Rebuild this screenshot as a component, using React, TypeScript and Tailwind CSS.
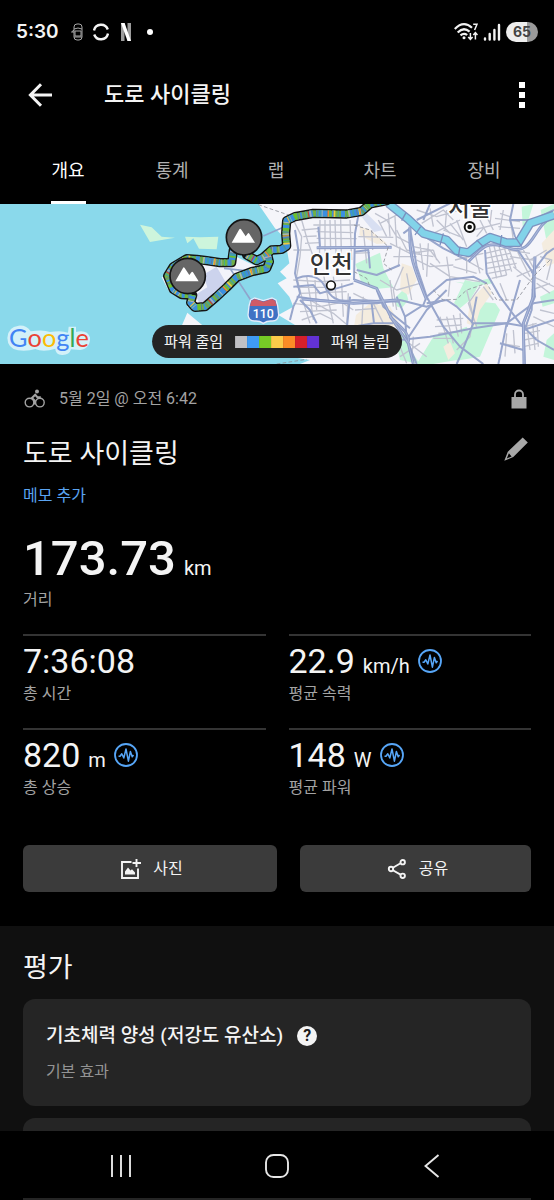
import type { ReactNode } from "react";

const WATER = "#8ad9eb";

const greenAreas = [
  "M1066 192 L1140 158 L1150 205 L1168 240 L1180 262 L1120 268 L1085 250Z",
  "M1188 290 L1215 265 L1225 300 L1205 325 L1188 318Z",
  "M1362 310 L1395 240 L1440 250 L1410 300 L1380 325Z",
  "M1425 350 L1440 305 L1486 310 L1500 330 L1470 400 L1440 470 L1370 482 L1350 450 L1400 420Z",
  "M1250 492 L1300 410 L1350 400 L1400 380 L1420 420 L1370 480 L1300 492Z",
  "M1565 20 L1600 12 L1585 60 L1568 80Z",
  "M1622 30 L1662 12 L1662 120 L1640 125Z",
  "M1630 470 L1640 420 L1662 400 L1662 480Z",
  "M1182 400 L1215 400 L1225 440 L1260 492 L1200 480Z",
  "M1620 290 L1662 270 L1662 310 L1628 320Z",
  "M1365 245 L1405 250 L1470 235 L1480 250 L1420 258Z",
];

const sandAreas = [
  "M1068 345 L1110 310 L1170 318 L1195 370 L1180 382 L1062 380Z",
  "M1080 80 L1110 90 L1160 130 L1130 132 L1078 105Z",
  "M1205 190 L1236 200 L1250 240 L1225 285 L1200 270Z",
  "M1412 300 L1460 250 L1475 280 L1440 330 L1425 380 L1400 370Z",
  "M1625 130 L1662 90 L1662 190 L1640 200Z",
  "M1330 440 L1350 425 L1365 460 L1345 480Z",
];

const minorRoads = [
  "M880 60 L905 110 L900 170 L890 230 L905 290 L930 370",
  "M905 60 L925 130 L940 170 M905 90 L960 85 M910 110 L950 108 M915 130 L960 128 M880 150 L930 150",
  "M960 60 L958 200 M975 60 L975 160 M990 60 L992 150 M1005 60 L1008 160 M1022 58 L1024 160 M1050 60 L1055 180",
  "M940 75 L1080 75 M950 95 L1060 98 M950 115 L1070 116",
  "M880 240 L960 245 L1050 240 M890 262 L1000 262 M900 280 L1040 275 M880 310 L960 320 L1060 300 M900 335 L1010 330",
  "M920 230 L930 290 L940 360 M945 240 L950 330 M970 220 L985 300 L1000 370 M1000 230 L1010 300 M1025 250 L1030 350 M1045 280 L1040 380",
  "M905 360 L960 340 L1000 360 M1000 290 L1060 330 M930 300 L1000 340 L1060 390",
  "M1060 280 L1120 310 L1150 370 M1065 330 L1130 325 M1090 290 L1085 385",
  "M1062 140 L1115 143 M1062 160 L1110 158 M1075 110 L1180 112 M1090 90 L1100 190 M1115 90 L1118 150",
  "M1125 40 L1160 60 L1190 110 L1230 130 M1140 70 L1200 40 M1135 60 L1160 110 M1165 40 L1170 110 M1185 50 L1190 140",
  "M1190 90 L1220 150 L1260 160 M1170 130 L1230 160 L1300 150 M1180 170 L1250 170 M1200 140 L1195 200",
  "M1240 140 L1290 150 L1320 190 M1240 160 L1300 170 M1250 180 L1290 200 L1360 195 M1260 130 L1270 210 M1285 130 L1280 230 M1300 150 L1310 180",
  "M1250 30 L1310 50 L1380 30 M1265 70 L1330 30 L1360 60 M1290 25 L1300 80 M1310 60 L1350 100 M1340 30 L1335 90 M1300 100 L1380 60",
  "M1330 90 L1380 110 M1350 70 L1390 120 M1370 60 L1400 140 M1440 60 L1460 100 M1455 40 L1480 90 M1475 30 L1470 70 M1420 90 L1500 70 M1430 110 L1450 85",
  "M1500 40 L1530 50 L1540 120 M1485 55 L1560 65 M1495 80 L1560 85 M1510 30 L1500 90",
  "M1365 180 L1450 160 M1360 200 L1430 220 M1340 170 L1350 240 L1345 290 M1290 190 L1350 230 L1440 245 M1380 170 L1450 210 M1400 160 L1400 220 M1425 160 L1440 220",
  "M1455 160 L1520 145 M1455 175 L1530 160 M1458 190 L1540 175 M1462 205 L1550 190 M1465 220 L1530 208 M1475 235 L1520 225",
  "M1468 140 L1490 235 M1482 138 L1505 230 M1496 135 L1520 225 M1510 135 L1535 215 M1524 140 L1548 205",
  "M1525 150 L1590 160 M1530 170 L1600 180 M1550 150 L1590 230 M1570 150 L1610 220 M1540 200 L1600 250 M1550 230 L1620 200 M1590 180 L1640 150",
  "M1600 230 L1662 260 M1610 250 L1650 280 M1620 170 L1655 180 L1640 240 M1595 270 L1650 250",
  "M1310 360 L1390 355 M1305 380 L1385 375 M1315 400 L1380 395 M1300 415 L1360 415 M1320 350 L1345 430 M1340 350 L1360 430 M1360 345 L1375 410 M1380 340 L1385 400",
  "M1575 380 L1610 370 M1575 400 L1620 392 M1572 420 L1610 412 M1570 440 L1615 430 M1580 370 L1590 450 M1598 370 L1605 450 M1612 380 L1615 440",
  "M1210 200 L1180 270 L1190 330 M1140 240 L1190 270 L1260 250 M1220 220 L1235 300 M1170 240 L1180 320",
  "M1400 270 L1420 350 L1410 410 L1370 450 M1440 260 L1405 310 L1430 380 M1500 250 L1520 300 M1450 260 L1480 300",
  "M1215 420 L1280 470 M1200 440 L1220 490 M1240 410 L1235 480 M1260 430 L1200 470",
  "M1500 430 L1560 440 M1520 400 L1515 470 M1540 390 L1545 460 M1620 330 L1662 340 M1600 350 L1662 380",
];

const mainRoads = [
  "M885 90 L895 150 L885 220 L900 280 L880 320 L870 360",
  "M955 80 L960 140 M1080 20 L1065 100 L1062 240",
  "M890 235 C930 220 960 230 975 260 S1010 310 1060 300 L1200 305",
  "M880 260 L940 255 L960 280 L1060 250",
  "M890 290 L960 300 L1060 310 L1130 310 L1200 300 L1280 320 L1330 300",
  "M900 300 L930 330 L950 370 M1050 290 L1040 390",
  "M1065 155 L1105 150 L1110 205 M1070 210 L1130 225 L1200 195",
  "M1210 100 L1230 85 L1245 170 L1250 200 L1280 290 L1330 380 L1380 440 L1450 492",
  "M1250 60 L1350 10 M1290 12 L1270 60",
  "M1200 35 L1260 100 L1330 145 L1400 180",
  "M1130 270 L1150 320 L1230 385 M1190 290 L1215 350 L1220 420 L1250 492",
  "M1215 350 L1270 315 L1280 290 L1340 240 L1420 230 L1460 250",
  "M1280 310 L1340 300 L1370 320 L1420 370 L1520 370 L1600 310 L1662 300",
  "M1200 420 L1290 410 L1420 385 L1520 370 L1580 380",
  "M1220 420 L1280 330 L1340 270",
  "M1420 370 L1380 470 L1370 492 M1430 290 L1415 370",
  "M1455 150 L1460 220 L1500 290 L1560 370 L1610 420",
  "M1520 370 L1500 470 L1495 492 M1560 240 L1520 380",
  "M1550 145 L1600 220 L1605 290 L1570 370 L1575 492",
  "M1600 220 L1595 330 L1570 400 M1500 430 L1570 450",
  "M1595 220 L1640 160 L1662 145",
  "M1540 12 L1530 60 L1545 110 M1530 60 L1600 60 L1662 30",
  "M1570 390 L1662 360 M1610 420 L1662 450",
  "M1060 380 L1120 370 L1180 370 M1115 310 L1122 370",
];

const expressways = [
  "M1230 80 C1225 160 1240 200 1280 300 M1170 350 C1200 380 1230 400 1225 425",
  "M1062 240 L1130 265 L1175 355 L1225 430 L1240 492",
  "M950 143 L1175 142",
  "M1405 185 C1450 140 1460 120 1530 145 S1600 70 1662 50",
  "M1605 170 L1600 290 L1570 370 L1572 492",
  "M905 297 L1060 310 L1190 300",
];

const riverPath =
  "M1165 10 L1225 58 L1270 100 L1340 120 L1370 152 L1405 158 L1440 130 L1470 112 L1520 128 L1555 128 L1590 70 L1662 45";

const routePaths = [
  "M1160 2 L1110 12 L1085 34 L1040 42 L940 40 L885 50 L860 62 L857 100 L860 138 L845 148 L815 150 L790 172 L770 182 L740 165",
  "M803 165 L808 185 L800 205 L755 215 L710 232 L680 262 L650 290 L615 320 L585 322 L572 308 L578 285",
  "M700 150 L695 188 L660 188 L620 182 L590 178 L560 176 L520 200 L503 228 L520 268 L545 284 L570 285",
];

const routeBands = [
  { color: "#3b8fe0", dash: "34 9 12 21 6 14", offset: 4 },
  { color: "#3f9fb0", dash: "4 19 6 41 3 23", offset: 12 },
  { color: "#6cc02e", dash: "11 47 5 33 3 60", offset: 40 },
  { color: "#a9b0ba", dash: "3 31 5 58 2 17", offset: 30 },
  { color: "#5d7f96", dash: "2 15 3 29 2 38", offset: 9 },
  { color: "#f0c93e", dash: "5 137 3 71", offset: 52 },
  { color: "#f0872a", dash: "4 171 3 93", offset: 88 },
  { color: "#d3303a", dash: "3 260", offset: 20 },
];

function MountainMarker({ x, y }: { x: number; y: number }) {
  return (
    <g transform={`translate(${x} ${y})`}>
      <circle r="53" fill="#666666" stroke="#141414" strokeWidth="5" />
      <path d="M-37 16 L-14 -24 Q-12 -28 -9 -24 L5 -3 L12 -12 Q14 -14 16 -11 L33 16Z" fill="#ffffff" />
    </g>
  );
}

function RouteMap() {
  return (
    <svg
      className="block h-40 w-full"
      viewBox="0 0 1662 480"
      preserveAspectRatio="xMidYMid slice"
      role="img"
      aria-label="Google 지도"
    >
      <rect width="1662" height="480" fill={WATER} />
      <g transform="translate(0 -12)">
        <g fill="#cdf5dc">
          <path d="M420 74 L455 82 L485 110 L525 113 L450 126Z" />
          <path d="M555 110 L600 112 L655 110 L650 148 L597 146 L580 115 L562 130Z" />
        </g>
        <path
          d="M775 12 L825 85 L845 105 L860 145 L868 190 L840 215 L860 235 L833 250 L868 290 L880 320 L835 345 L885 375 L870 470 L930 480 L900 492 L1662 492 L1662 12Z"
          fill="#f5f5fa"
        />
        <path d="M500 225 L522 260 L520 280 L508 276 L485 232Z M560 280 L570 325 L562 320Z M562 338 L610 378 L545 378Z" fill="#f5f5fa" />
        <path d="M548 200 L625 190 L692 192 L712 172 L760 195 L800 200 L740 222 L700 238 L665 275 L615 312 L582 318 L562 285Z" fill="#f2f3fa" />
        <path d="M610 224 L650 200 L678 248 L630 295 L600 312 L585 285 L622 262Z" fill="#ccd3ed" />
        <path d="M690 205 L752 300 M712 235 L735 212 L672 205 M790 108 L850 82" stroke="#8fa4cc" strokeWidth="5" fill="none" />
        <g fill="#c3f5da">
          {greenAreas.map((d) => <path key={d} d={d} />)}
        </g>
        <g fill="#f4ecdf">
          {sandAreas.map((d) => <path key={d} d={d} />)}
        </g>
        <path d="M1080 45 L1100 40 L1150 90 L1122 96Z" fill="#d8dff2" />
        <g fill="none" stroke="#c0c3d0" strokeWidth="4" strokeLinejoin="round">
          {minorRoads.map((d) => <path key={d} d={d} />)}
        </g>
        <g fill="none" stroke="#98a6cc" strokeWidth="6" strokeLinejoin="round">
          {mainRoads.map((d) => <path key={d} d={d} />)}
        </g>
        <g fill="none" stroke="#8e9dc8" strokeWidth="9" strokeLinejoin="round">
          {expressways.map((d) => <path key={d} d={d} />)}
        </g>
        <g fill="none" stroke="#b3c1df" strokeWidth="2.5" strokeLinejoin="round">
          {expressways.map((d) => <path key={d} d={d} />)}
        </g>
        <g fill="none" stroke="#8d8f99" strokeWidth="2.5" strokeDasharray="11 7">
          <path d="M1062 75 L1110 90 L1165 140 L1150 190 L1175 210" />
          <path d="M1300 270 L1330 300 L1370 298 L1400 270 L1460 250 L1490 300 L1550 300 L1600 230 L1650 180" />
          <path d="M775 14 L880 50 M1062 215 L1100 235 L1110 260 M830 492 L920 478" />
        </g>
        <g fill="none" strokeLinejoin="round">
          <path d={riverPath} stroke="#7d93c0" strokeWidth="27" />
          <path d={riverPath} stroke="#82d3e9" strokeWidth="19" />
          <path d="M1218 38 L1205 62 M1262 80 L1245 105 M1330 100 L1320 135 M1380 140 L1375 170 M1430 120 L1450 140 M1505 105 L1500 140 M1545 110 L1565 140" stroke="#7c90bf" strokeWidth="4" />
        </g>
        <g fill="none" strokeLinejoin="round">
          {routePaths.map((d) => <path key={d} d={d} stroke="#151515" strokeWidth="28" strokeLinecap="round" />)}
          {routePaths.map((d) => <path key={d} d={d} stroke="#70b048" strokeWidth="19" />)}
          {routeBands.map((band) =>
            routePaths.map((d) => (
              <path key={band.color + d} d={d} stroke={band.color} strokeWidth="19" strokeDasharray={band.dash} strokeDashoffset={band.offset} />
            )),
          )}
        </g>
        <MountainMarker x={732} y={112} />
        <MountainMarker x={563} y={228} />
        <g>
          <path d="M752 300 L764 294 L790 302 L816 294 L828 300 L833 318 L836 345 Q834 364 815 363 Q802 362 790 370 Q778 362 765 363 Q746 364 744 345 L747 318Z" fill="#3f72c4" stroke="#e4ecfa" strokeWidth="4" />
          <path d="M754 302 L765 297 L790 305 L815 297 L826 302 L830 318 L750 318Z" fill="#cf5b67" />
          <text x="790" y="354" textAnchor="middle" fontSize="37" fontWeight="500" fill="#ffffff" fontFamily="Roboto, sans-serif">110</text>
        </g>
        <g fill="#333333" stroke="#ffffff" strokeWidth="9" paintOrder="stroke" fontFamily="'Noto Sans CJK KR', sans-serif" fontWeight="500" textAnchor="middle">
          <text x="994" y="220" fontSize="70">인천</text>
          <text x="1409" y="48" fontSize="70">서울</text>
        </g>
        <circle cx="993" cy="256" r="13" fill="#ffffff" stroke="#151515" strokeWidth="5" />
        <circle cx="1409" cy="81" r="15" fill="#ffffff" stroke="#111111" strokeWidth="6" />
        <circle cx="1409" cy="81" r="7" fill="#111111" />
        <path
          d="M56 377 Q80 375 92 394 Q130 388 150 396 Q185 390 204 398 L206 380 H228 V396 Q262 388 270 412 Q272 446 240 450 L213 448 Q208 466 186 465 Q166 464 166 446 Q130 458 106 447 Q84 454 54 451 Q23 446 22 414 Q24 380 56 377Z"
          fill="#d3f1f9"
        />
        <text x="27" y="440" fontSize="76" fontFamily="Lato, sans-serif">
          <tspan fill="#4285f4">G</tspan><tspan fill="#ea4335">o</tspan><tspan fill="#fbbc05">o</tspan><tspan fill="#4285f4">g</tspan><tspan fill="#34a853">l</tspan><tspan fill="#ea4335">e</tspan>
        </text>
      </g>
    </svg>
  );
}

function StatusBar() {
  return (
    <div className="flex h-16 items-center justify-between px-4">
      <div className="flex items-center">
        <span className="font-['Inter'] text-[19px] font-semibold">5:30</span>
        <svg className="ml-3 h-5 w-3" viewBox="0 0 12 20" fill="none" stroke="#a8a8a8" strokeWidth="1">
          <path d="M3 5 Q3 2 6 2 H8 Q11 2 11 5 V15 Q11 18 8 18 H6 Q3 18 3 15Z M3 7 Q7 5 11 7 M4 9 H10 V14 H4Z M3 8 L0.5 10 H3 M3 15 H11" />
        </svg>
        <svg className="ml-2.5 h-5 w-4" viewBox="0 0 16 20" fill="none" stroke="#f4f4f4" strokeWidth="2.4">
          <path d="M1 8.5 A7.2 7.2 0 0 1 14.8 7.5 M1.2 12.5 A7.2 7.2 0 0 0 15 11.5" />
        </svg>
        <svg className="ml-3 h-5 w-2.5" viewBox="0 0 10 20">
          <path d="M0 1 H3.5 V19 L0 19Z M6.5 1 H10 V19 H6.5Z" fill="#9c9c9c" />
          <path d="M0 1 H3.6 L10 19 H6.5Z" fill="#ffffff" />
        </svg>
        <span className="ml-4 size-1.5 rounded-full bg-white" />
      </div>
      <div className="flex items-center">
        <svg className="h-5 w-6" viewBox="0 0 24 20" fill="none" stroke="#f2f2f2" strokeWidth="2.2">
          <path d="M0.8 7 Q9.5 -2 18 5.8 M3.7 10.4 Q9.5 4.5 15.6 9.6 M6.5 13.4 Q9.8 10.4 13.2 13" />
          <circle cx="10" cy="15.8" r="1.5" fill="#f2f2f2" stroke="none" />
          <path d="M19.2 2.2 H23 L20.6 8 M16.4 11 V17 M14.2 15 L16.4 17.4 L18.6 15 M21.4 17.5 V11 M19.3 13 L21.4 10.6 L23.5 13" strokeWidth="1.5" />
        </svg>
        <svg className="ml-1 h-5 w-5" viewBox="0 0 20 20" stroke="#f2f2f2" strokeWidth="2.4" strokeLinecap="round">
          <path d="M3 16.5 V17.5 M7.7 12 V17.5 M12.4 8 V17.5 M17 3 V17.5" />
        </svg>
        <span className="ml-1 flex h-5 w-8 items-center justify-center rounded-full bg-linear-to-r from-[#eeeeee] from-65% to-[#9a9a9a] to-65% font-['Inter'] text-sm font-bold text-[#444444]">
          65
        </span>
      </div>
    </div>
  );
}

function AppBar() {
  return (
    <header className="flex h-[62px] items-center pr-5 pl-7">
      <button type="button" aria-label="뒤로" className="flex size-6 items-center justify-center">
        <svg className="size-6" viewBox="0 0 24 24" fill="none" stroke="currentColor" strokeWidth="3">
          <path d="M24 12 H3 M13 1.2 L2.4 12 L13 22.8" />
        </svg>
      </button>
      <h1 className="ml-13 flex-1 text-[22px] leading-8 font-medium">도로 사이클링</h1>
      <button type="button" aria-label="더보기" className="flex w-6 flex-col items-center gap-1">
        <span className="size-1.5 bg-white" />
        <span className="size-1.5 bg-white" />
        <span className="size-1.5 bg-white" />
      </button>
    </header>
  );
}

const tabs = ["개요", "통계", "랩", "차트", "장비"];

function Tabs() {
  return (
    <nav className="mt-2 grid grid-cols-5 pr-4.5 pl-4" role="tablist">
      {tabs.map((tab, index) => (
        <button
          key={tab}
          type="button"
          role="tab"
          aria-selected={index === 0}
          className={
            index === 0
              ? "mx-auto h-[70px] w-[35px] border-b-3 border-white pt-1.5 text-lg whitespace-nowrap text-white"
              : "mx-auto h-[70px] w-[35px] border-b-3 border-transparent pt-1.5 text-lg whitespace-nowrap text-[#b0b0b0]"
          }
        >
          {tab}
        </button>
      ))}
    </nav>
  );
}

function PowerLegend() {
  return (
    <div className="absolute bottom-1.5 left-1/2 flex h-[33px] -translate-x-1/2 items-center gap-3 rounded-full bg-[#242424] px-3 text-[15px] leading-5 whitespace-nowrap">
      <span>파워 줄임</span>
      <span className="flex h-3">
        <span className="w-3 bg-[#c0c0c4]" />
        <span className="w-3 bg-[#3f9bf4]" />
        <span className="w-3 bg-[#76cb26]" />
        <span className="w-3 bg-[#fbcb4a]" />
        <span className="w-3 bg-[#fb8c26]" />
        <span className="w-3 bg-[#d6202a]" />
        <span className="w-3 bg-[#6332d4]" />
      </span>
      <span>파워 늘림</span>
    </div>
  );
}

function PulseButton({ label }: { label: string }) {
  return (
    <button type="button" aria-label={label} className="ml-2 size-6 self-center text-[#57a6f7]">
      <svg className="size-6" viewBox="0 0 24 24" fill="none" stroke="currentColor" strokeLinejoin="round">
        <circle cx="12" cy="12" r="11" strokeWidth="1.8" />
        <path d="M4.5 13.3 H6 L7.8 10.8 L9.8 15 L12 6 L14.4 18.2 L16.4 8.5 L18.2 13.8 L19.5 12" strokeWidth="1.5" />
      </svg>
    </button>
  );
}

type StatProps = { value: string; unit?: string; label: string; chart?: boolean };

function Stat({ value, unit, label, chart }: StatProps) {
  return (
    <div className="h-[94px] border-t-2 border-[#343434] pt-[5px]">
      <div className="flex h-10 items-baseline">
        <span className="text-[34px] leading-10">{value}</span>
        {unit && <span className="ml-2 text-xl leading-6">{unit}</span>}
        {chart && <PulseButton label={`${label} 차트`} />}
      </div>
      <div className="text-base leading-[26px] text-[#a3a3a3]">{label}</div>
    </div>
  );
}

function ActionButton({ className, icon, children }: { className: string; icon: ReactNode; children: ReactNode }) {
  return (
    <button type="button" className={`flex h-[47px] items-center justify-center gap-3 rounded-md bg-[#3b3b3b] pl-1 text-base ${className}`}>
      {icon}
      <span>{children}</span>
    </button>
  );
}

function Summary() {
  return (
    <section className="px-[23px] pb-[34px]">
      <div className="flex h-[70px] items-center text-[#a3a3a3]">
        <svg className="size-6" viewBox="0 0 24 24" fill="none" stroke="currentColor" strokeWidth="1.4">
          <circle cx="6.5" cy="15.6" r="4.3" />
          <circle cx="16.9" cy="15.6" r="4.3" />
          <circle cx="14" cy="4.6" r="2" fill="currentColor" stroke="none" />
          <path d="M11.8 17.5 V13.6 L8.9 11 L12.2 7.8 L14.4 10.2 H17.8" strokeWidth="2" />
        </svg>
        <time className="ml-3 flex-1 text-base">5월 2일 @ 오전 6:42</time>
        <svg className="h-5 w-6" viewBox="0 0 24 20" fill="#a8a8a8" aria-label="비공개" role="img">
          <path d="M4.5 8 H19.5 V19.5 H4.5Z" />
          <path d="M8 9 V5.5 A4 4 0 0 1 16 5.5 V9" fill="none" stroke="#a8a8a8" strokeWidth="1.8" />
        </svg>
      </div>
      <div className="flex h-10 items-center justify-between pr-[3px]">
        <h2 className="text-[27px] leading-10">도로 사이클링</h2>
        <button type="button" aria-label="이름 편집" className="mb-2.5 size-6 text-[#a8a8a8]">
          <svg className="size-6" viewBox="0 0 24 24" fill="currentColor">
            <path d="M18.7 0.5 L23.8 5.5 L9.3 20 L0.3 23.8 L3.8 14.8Z M4.9 16.2 L2.8 21.4 L7.6 19.4Z" fillRule="evenodd" />
          </svg>
        </button>
      </div>
      <button type="button" className="mt-2.5 block text-base leading-6 text-[#5aa4f2]">메모 추가</button>
      <div className="mt-5 flex h-[60px] items-baseline">
        <span className="text-[49px] leading-[62px] font-medium">173.73</span>
        <span className="ml-2 text-xl leading-6">km</span>
      </div>
      <div className="text-base leading-6 text-[#a3a3a3]">거리</div>
      <div className="mt-[22px] grid grid-cols-2 gap-x-[23px]">
        <Stat value="7:36:08" label="총 시간" />
        <Stat value="22.9" unit="km/h" label="평균 속력" chart />
        <Stat value="820" unit="m" label="총 상승" chart />
        <Stat value="148" unit="W" label="평균 파워" chart />
      </div>
      <div className="mt-[23px] flex gap-[23px]">
        <ActionButton
          className="flex-11"
          icon={
            <svg className="size-5" viewBox="0 0 20 20" fill="none" stroke="currentColor" strokeWidth="1.9">
              <path d="M10.5 3 H1 V19 H17 V9.5 M15.5 0 V8 M11.5 4 H20" />
              <path d="M4 15.5 V12.5 L7 8.6 L9.5 11.6 L11 10.2 L14 13.6 V15.5Z" fill="currentColor" stroke="none" />
            </svg>
          }
        >
          사진
        </ActionButton>
        <ActionButton
          className="flex-10"
          icon={
            <svg className="size-5" viewBox="0 0 20 20" fill="none" stroke="currentColor" strokeWidth="1.9">
              <path d="M5.4 9 L14 4 M5.4 11 L14 15.8" />
              <circle cx="4" cy="10" r="2.2" />
              <circle cx="15.7" cy="3.2" r="2.2" />
              <circle cx="15.7" cy="16.8" r="2.2" />
            </svg>
          }
        >
          공유
        </ActionButton>
      </div>
    </section>
  );
}

function Evaluation() {
  return (
    <section className="min-h-0 flex-1 overflow-hidden bg-[#101010] px-[23px] pt-[22px]">
      <h2 className="text-[27px] leading-10">평가</h2>
      <article className="mt-[11px] h-[107px] rounded-xl bg-[#252525] px-[23px] pt-[25px]">
        <div className="flex items-center gap-3.5">
          <h3 className="text-[19px] leading-6 font-medium">기초체력 양성 (저강도 유산소)</h3>
          <button type="button" aria-label="도움말" className="flex size-5 items-center justify-center rounded-full bg-[#f4f4f4] text-base leading-5 font-bold text-[#1c1c1c]">
            ?
          </button>
        </div>
        <p className="mt-3 text-base leading-6 text-[#949494]">기본 효과</p>
      </article>
      <div className="mt-3 h-24 rounded-xl bg-[#252525]" />
    </section>
  );
}

function SystemNav() {
  return (
    <nav className="h-[69px] shrink-0 bg-black">
      <div className="flex h-[67px] items-center justify-around px-[43px] pt-0.5 text-[#e6e6e6]">
        <button type="button" aria-label="최근 앱" className="size-6">
          <svg className="size-6" viewBox="0 0 24 24" stroke="currentColor" strokeWidth="1.9">
            <path d="M3 1 V23 M12 1 V23 M21 1 V23" />
          </svg>
        </button>
        <button type="button" aria-label="홈" className="size-6">
          <svg className="size-6" viewBox="0 0 24 24" fill="none" stroke="currentColor" strokeWidth="1.9">
            <rect x="1" y="1" width="22" height="22" rx="7.5" />
          </svg>
        </button>
        <button type="button" aria-label="뒤로" className="size-6">
          <svg className="size-6" viewBox="0 0 24 24" fill="none" stroke="currentColor" strokeWidth="1.9">
            <path d="M17.5 1 L4.5 12 L17.5 23" />
          </svg>
        </button>
      </div>
      <div className="mx-[23px] h-0.5 bg-[#252525]" />
    </nav>
  );
}

export default function App() {
  return (
    <div className="flex h-screen flex-col overflow-hidden bg-black font-['Roboto','Noto_Sans_CJK_KR',sans-serif] text-[#f4f4f4]">
      <div className="shrink-0">
        <StatusBar />
        <AppBar />
        <Tabs />
        <div className="relative">
          <RouteMap />
          <PowerLegend />
        </div>
        <Summary />
      </div>
      <Evaluation />
      <SystemNav />
    </div>
  );
}
